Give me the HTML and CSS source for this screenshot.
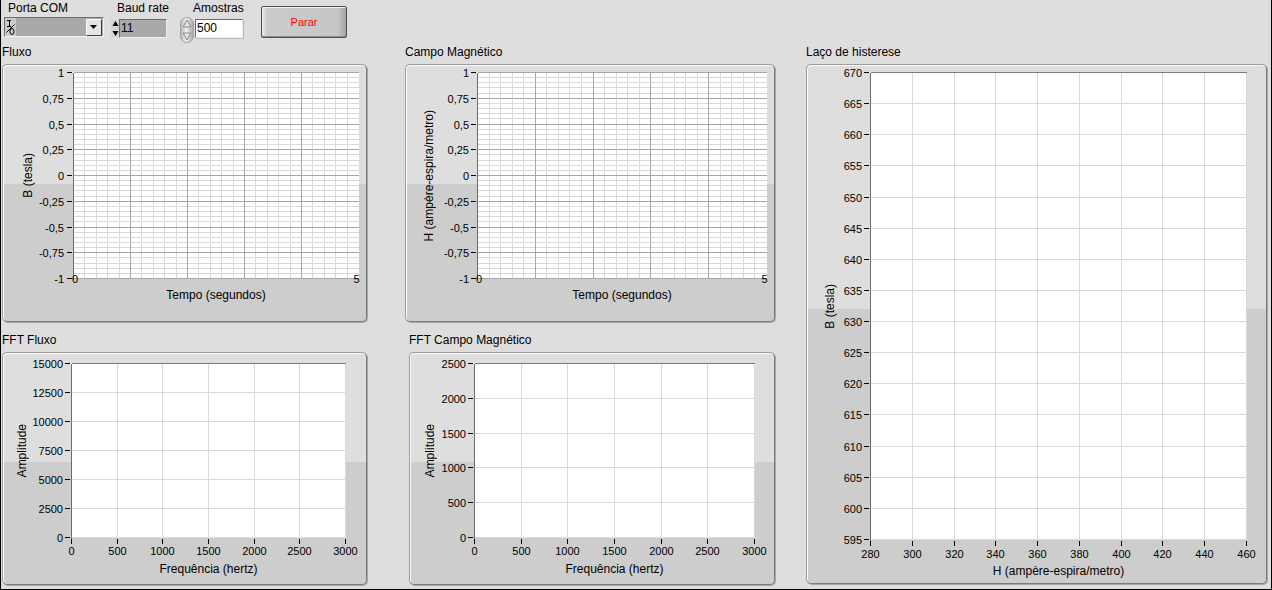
FILE: index.html
```html
<!DOCTYPE html>
<html lang="pt">
<head>
<meta charset="utf-8">
<title>Laço de histerese</title>
<link rel="stylesheet" href="styles.css">
</head>
<body>
<div class="window">
  <div class="toolbar">
    <div class="ctl ctl-com">
      <div class="ctl-label">Porta COM</div>
      <div class="combo">
        <span class="combo-io">
          <svg width="11" height="18" viewBox="0 0 11 18">
            <line x1="2" y1="2.5" x2="6" y2="2.5" stroke="#000"/>
            <line x1="4.5" y1="2" x2="4.5" y2="9" stroke="#000"/>
            <line x1="2" y1="8.5" x2="6" y2="8.5" stroke="#000"/>
            <line x1="1.5" y1="14.5" x2="9.5" y2="6.5" stroke="#000"/>
            <ellipse cx="7" cy="13.5" rx="2" ry="3" fill="none" stroke="#000"/>
          </svg>
        </span>
        <span class="combo-field"></span>
        <span class="combo-btn">
          <svg width="8" height="5" viewBox="0 0 8 5"><path d="M0 0 H7 L3.5 4 Z" fill="#000"/></svg>
        </span>
      </div>
    </div>
    <div class="ctl ctl-baud">
      <div class="ctl-label">Baud rate</div>
      <div class="numeric">
        <span class="arrows">
          <svg width="7" height="17" viewBox="0 0 7 17">
            <path d="M3.5 1 L6.5 6 H0.5 Z" fill="#000"/>
            <path d="M3.5 16 L6.5 11 H0.5 Z" fill="#000"/>
          </svg>
        </span>
        <span class="num-field num-grey">11</span>
      </div>
    </div>
    <div class="ctl ctl-samples">
      <div class="ctl-label">Amostras</div>
      <div class="numeric">
        <span class="spinner">
          <svg width="14" height="26" viewBox="0 0 14 26">
            <defs>
              <linearGradient id="spin-g" x1="0" x2="1" y1="0" y2="0">
                <stop offset="0" stop-color="#b4b4b4"/>
                <stop offset="0.45" stop-color="#f0f0f0"/>
                <stop offset="1" stop-color="#a6a6a6"/>
              </linearGradient>
            </defs>
            <rect x="0.5" y="0.5" width="13" height="25" rx="6.5" fill="url(#spin-g)" stroke="#a0a0a0"/>
            <path d="M7 3 L11 10 H3 Z" fill="#e4e4e4" stroke="#8a8a8a"/>
            <path d="M7 23 L11 16 H3 Z" fill="#e4e4e4" stroke="#8a8a8a"/>
          </svg>
        </span>
        <span class="num-field num-white">500</span>
      </div>
    </div>
    <button class="stop-btn" type="button">Parar</button>
  </div>

  <div class="panels">
    <div class="left-col">
      <div class="chart-row row-top">
        <section class="chart chart-fluxo">
          <h2 class="chart-label">Fluxo</h2>
          <div class="frame">
            <svg class="plot" id="plot-fluxo" aria-hidden="true"></svg>
            <div class="y-title"><span>B (tesla)</span></div>
            <div class="x-title">Tempo (segundos)</div>
          </div>
        </section>
        <section class="chart chart-campo">
          <h2 class="chart-label">Campo Magnético</h2>
          <div class="frame">
            <svg class="plot" id="plot-campo" aria-hidden="true"></svg>
            <div class="y-title"><span>H (ampère-espira/metro)</span></div>
            <div class="x-title">Tempo (segundos)</div>
          </div>
        </section>
      </div>
      <div class="chart-row row-bottom">
        <section class="chart chart-fftf">
          <h2 class="chart-label">FFT Fluxo</h2>
          <div class="frame">
            <svg class="plot" id="plot-fftf" aria-hidden="true"></svg>
            <div class="y-title"><span>Amplitude</span></div>
            <div class="x-title">Frequência (hertz)</div>
          </div>
        </section>
        <section class="chart chart-fftc">
          <h2 class="chart-label">FFT Campo Magnético</h2>
          <div class="frame">
            <svg class="plot" id="plot-fftc" aria-hidden="true"></svg>
            <div class="y-title"><span>Amplitude</span></div>
            <div class="x-title">Frequência (hertz)</div>
          </div>
        </section>
      </div>
    </div>
    <section class="chart chart-laco">
      <h2 class="chart-label">Laço de histerese</h2>
      <div class="frame">
        <svg class="plot" id="plot-laco" aria-hidden="true"></svg>
        <div class="y-title"><span>B (tesla)</span></div>
        <div class="x-title">H (ampère-espira/metro)</div>
      </div>
    </section>
  </div>
</div>
<script src="script.js"></script>
</body>
</html>
```

FILE: styles.css
```css
* { box-sizing: border-box; }

html, body {
  margin: 0;
  padding: 0;
}

body {
  width: 1272px;
  height: 590px;
  overflow: hidden;
  background: #dedede;
  font-family: "Liberation Sans", Arial, sans-serif;
  font-size: 12px;
  color: #000;
}

.window {
  width: 1272px;
  height: 590px;
  border: 1px solid #000;
  border-top: 0;
  background: #dedede;
  display: flex;
  flex-direction: column;
}

/* ---------- toolbar ---------- */
.toolbar {
  height: 44px;
  flex: none;
  display: flex;
  align-items: flex-start;
  padding-left: 3px;
}

.ctl { flex: none; }

.ctl-label {
  line-height: 14px;
  padding-top: 1px;
  margin-bottom: 2px;
  white-space: nowrap;
}

.ctl-com { width: 100px; }
.ctl-com .ctl-label { padding-left: 4px; }
.ctl-baud { width: 56px; margin-left: 7px; }
.ctl-baud .ctl-label { padding-left: 6px; }
.ctl-samples { width: 63px; margin-left: 13px; }
.ctl-samples .ctl-label { padding-left: 13px; }

.combo {
  display: flex;
  align-items: center;
  width: 100px;
  height: 20px;
  border: 1px solid;
  border-color: #6f6f6f #f2f2f2 #f2f2f2 #6f6f6f;
  background: #a9a9a9;
}

.combo-io {
  width: 11px;
  height: 18px;
  background: #cacaca;
  display: flex;
}

.combo-field {
  flex: 1;
  height: 18px;
  background: #a9a9a9;
}

.combo-btn {
  width: 16px;
  height: 17px;
  margin-right: 1px;
  background: #e4e4e4;
  border: 1px solid;
  border-color: #fafafa #3c3c3c #3c3c3c #fafafa;
  display: flex;
  align-items: center;
  justify-content: center;
}

.numeric {
  display: flex;
  align-items: flex-start;
}

.arrows {
  width: 8px;
  height: 17px;
  margin-top: 3px;
  background: #d4d4d4;
  display: flex;
  justify-content: center;
}

.num-field {
  display: block;
  width: 48px;
  height: 19px;
  margin-top: 2px;
  padding-left: 1px;
  line-height: 17px;
  font-size: 12px;
  border: 1px solid;
  border-color: #6a6a6a #eeeeee #eeeeee #6a6a6a;
}

.num-grey { background: #a9a9a9; }
.num-white { background: #fff; margin-left: 1px; box-shadow: 1px 1px 0 #b8b8b8; }

.spinner {
  display: flex;
  width: 14px;
  height: 26px;
}

.stop-btn {
  flex: none;
  margin-top: 6px;
  margin-left: 18px;
  width: 86px;
  height: 32px;
  padding: 0;
  border: 1px solid #4f4f4f;
  border-radius: 2px;
  background: linear-gradient(to right, #ececec 0, #cbcbcb 5px, #c6c6c6 calc(100% - 8px), #a2a2a2 100%);
  box-shadow: inset 0 1px 0 #f4f4f4, inset 0 -1px 0 #8e8e8e;
  color: #ff0000;
  font-family: "Liberation Sans", Arial, sans-serif;
  font-size: 11px;
}

/* ---------- panels ---------- */
.panels {
  display: flex;
  align-items: flex-start;
  gap: 31px;
  padding-left: 1px;
}

.left-col {
  width: 773px;
  display: flex;
  flex-direction: column;
}

.chart-row { display: flex; }
.row-top { gap: 38px; }
.row-bottom { gap: 42px; margin-top: 10px; }

.chart-label {
  margin: 0;
  height: 20px;
  line-height: 16px;
  font-size: 12px;
  font-weight: normal;
  white-space: nowrap;
}

.frame {
  display: grid;
  grid-template-columns: var(--tc) var(--lc) var(--pw) 1fr;
  grid-template-rows: var(--pt) var(--ph) 1fr;
  border: 1px solid;
  border-color: #9c9c9c #7b7b7b #7b7b7b #9c9c9c;
  border-radius: 5px;
  box-shadow: inset 1px 1px 0 #fbfbfb, 1px 1px 0 #a6a6a6;
  background: linear-gradient(#dedede 0, #dedede var(--split), #cdcdcd var(--split), #cdcdcd 100%);
}

.plot {
  grid-column: 2 / 5;
  grid-row: 1 / 4;
  width: 100%;
  height: 100%;
  display: block;
  overflow: visible;
}

.y-title {
  grid-column: 1;
  grid-row: 2;
  display: flex;
  align-items: center;
  justify-content: flex-end;
  padding-right: var(--tpr);
}

.y-title span {
  writing-mode: vertical-rl;
  transform: rotate(180deg);
  line-height: 14px;
  white-space: nowrap;
}

.x-title {
  grid-column: 3;
  grid-row: 3;
  text-align: center;
  padding-top: var(--xpt);
  line-height: 14px;
  white-space: nowrap;
}

/* per-chart geometry */
.chart-fluxo { width: 365px; }
.chart-fluxo .frame {
  height: 258px;
  --split: 119px; --tc: 37px; --lc: 33px; --pw: 286px;
  --pt: 7px; --ph: 207px; --tpr: 5px; --xpt: 9px;
}

.chart-campo { width: 370px; }
.chart-campo .frame {
  height: 258px;
  --split: 119px; --tc: 40px; --lc: 31px; --pw: 290px;
  --pt: 7px; --ph: 207px; --tpr: 10px; --xpt: 9px;
}

.chart-fftf { width: 365px; }
.chart-fftf .frame {
  height: 233px;
  --split: 109px; --tc: 29px; --lc: 39px; --pw: 275px;
  --pt: 10px; --ph: 175px; --tpr: 3px; --xpt: 24px;
}

.chart-fftc { width: 366px; }
.chart-fftc .frame {
  height: 233px;
  --split: 109px; --tc: 30px; --lc: 34px; --pw: 281px;
  --pt: 10px; --ph: 175px; --tpr: 3px; --xpt: 24px;
}

.chart-laco { width: 461px; }
.chart-laco .frame {
  height: 520px;
  --split: 244px; --tc: 33px; --lc: 30px; --pw: 377px;
  --pt: 7px; --ph: 468px; --tpr: 3px; --xpt: 24px;
}

.tick-label {
  font-family: "Liberation Sans", Arial, sans-serif;
  font-size: 11px;
  fill: #000;
}
```

FILE: script.js
```js
(function () {
  var NS = 'http://www.w3.org/2000/svg';

  function mk(parent, tag, attrs, text) {
    var e = document.createElementNS(NS, tag);
    for (var k in attrs) e.setAttribute(k, attrs[k]);
    if (text != null) e.textContent = text;
    parent.appendChild(e);
    return e;
  }

  function range(a, b, s) {
    var r = [];
    if (s > 0) { for (var v = a; v <= b; v += s) r.push(String(v)); }
    else { for (var w = a; w >= b; w += s) r.push(String(w)); }
    return r;
  }

  var xFreq = range(0, 3000, 500);
  var yUnit = ['1', '0,75', '0,5', '0,25', '0', '-0,25', '-0,5', '-0,75', '-1'];

  var charts = [
    { id: 'plot-fluxo', x0: 33, y0: 7, w: 285, h: 206, y: yUnit, dense: true, xl: ['0', '5'], lx: 9 },
    { id: 'plot-campo', x0: 31, y0: 7, w: 289, h: 206, y: yUnit, dense: true, xl: ['0', '5'], lx: 8 },
    { id: 'plot-fftf', x0: 39, y0: 10, w: 274, h: 174, y: range(15000, 0, -2500), x: xFreq, lb: 14, lx: 8 },
    { id: 'plot-fftc', x0: 34, y0: 10, w: 280, h: 174, y: range(2500, 0, -500), x: xFreq, lb: 14, lx: 8 },
    { id: 'plot-laco', x0: 30, y0: 7, w: 376, h: 467, y: range(670, 595, -5), x: range(280, 460, 20), lb: 15, lx: 8 }
  ];

  charts.forEach(function (c) {
    var svg = document.getElementById(c.id);
    if (!svg) return;
    var g = mk(svg, 'g', { 'shape-rendering': 'crispEdges' });
    var t = mk(svg, 'g', {});

    function X(i, n) { return Math.round(c.x0 + i * c.w / n) + 0.5; }
    function Y(j, n) { return Math.round(c.y0 + j * c.h / n) + 0.5; }
    function L(x1, y1, x2, y2, col) {
      mk(g, 'line', { x1: x1, y1: y1, x2: x2, y2: y2, stroke: col, 'stroke-width': 1 });
    }

    mk(g, 'rect', { x: c.x0, y: c.y0, width: c.w + 1, height: c.h + 1, fill: '#fff' });

    var ny = c.y.length - 1;
    var nx = c.x ? c.x.length - 1 : 5;
    var top = c.y0 + 0.5, bot = c.y0 + c.h + 0.5;
    var left = c.x0 + 0.5, right = c.x0 + c.w + 0.5;
    var i, j;

    if (c.dense) {
      var sub = 5;
      for (i = 1; i < nx * sub; i++) if (i % sub) L(X(i, nx * sub), top, X(i, nx * sub), bot, '#d9d9d9');
      for (j = 1; j < ny * sub; j++) if (j % sub) L(left, Y(j, ny * sub), right, Y(j, ny * sub), '#d9d9d9');
      for (i = 1; i < nx; i++) L(X(i, nx), top, X(i, nx), bot, '#a6a6a6');
      for (j = 0; j <= ny; j++) L(left, Y(j, ny), right, Y(j, ny), '#a6a6a6');
    } else {
      for (i = 1; i <= nx; i++) L(X(i, nx), top, X(i, nx), bot, '#d9d9d9');
      for (j = 1; j <= ny; j++) L(left, Y(j, ny), right, Y(j, ny), '#d9d9d9');
      L(left, top, right, top, '#7a7a7a');
    }

    L(left, top, left, bot + 1, '#6c6c6c');

    for (j = 0; j <= ny; j++) {
      var yy = Y(j, ny);
      L(c.x0 - 6, yy, c.x0 - 1, yy, '#000');
      mk(t, 'text', { x: c.x0 - c.lx, y: yy, 'text-anchor': 'end', 'dominant-baseline': 'central', 'class': 'tick-label' }, c.y[j]);
    }

    if (c.x) {
      for (i = 0; i <= nx; i++) {
        var xx = X(i, nx);
        L(xx, c.y0 + c.h + 2, xx, c.y0 + c.h + 7, '#000');
        mk(t, 'text', { x: xx, y: c.y0 + c.h + c.lb, 'text-anchor': 'middle', 'dominant-baseline': 'central', 'class': 'tick-label' }, c.x[i]);
      }
    } else if (c.xl) {
      mk(t, 'text', { x: c.x0 - 1, y: c.y0 + c.h + 0.5, 'text-anchor': 'start', 'dominant-baseline': 'central', 'class': 'tick-label' }, c.xl[0]);
      mk(t, 'text', { x: c.x0 + c.w + 1.5, y: c.y0 + c.h + 0.5, 'text-anchor': 'end', 'dominant-baseline': 'central', 'class': 'tick-label' }, c.xl[1]);
    }
  });
})();
```
